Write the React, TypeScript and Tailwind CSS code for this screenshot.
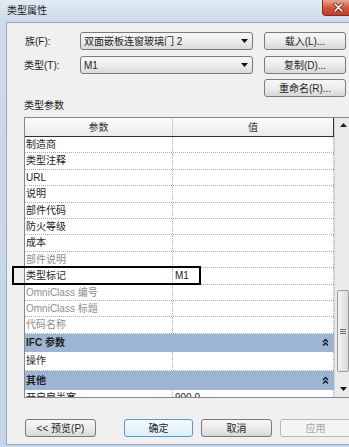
import React from 'react';

type Row = { name: string; value?: string; dim?: boolean };

const rows: Row[] = [
  { name: '制造商' },
  { name: '类型注释' },
  { name: 'URL' },
  { name: '说明' },
  { name: '部件代码' },
  { name: '防火等级' },
  { name: '成本' },
  { name: '部件说明', dim: true },
  { name: '类型标记', value: 'M1' },
  { name: 'OmniClass 编号', dim: true },
  { name: 'OmniClass 标题', dim: true },
  { name: '代码名称', dim: true },
];

function Chevrons() {
  return (
    <svg width="7" height="9" viewBox="0 0 7 9" className="shrink-0">
      <polyline points="1,4 3.5,1.5 6,4" fill="none" stroke="#111" strokeWidth="1.3" />
      <polyline points="1,7.5 3.5,5 6,7.5" fill="none" stroke="#111" strokeWidth="1.3" />
    </svg>
  );
}

function DownArrow() {
  return (
    <svg width="7" height="4" viewBox="0 0 7 4">
      <polygon points="0,0 7,0 3.5,4" fill="#111" />
    </svg>
  );
}

function Btn({ label, kind = 'normal', className = '' }: { label: string; kind?: 'normal' | 'focus' | 'off'; className?: string }) {
  const look =
    kind === 'focus'
      ? 'border-[#5b97c4] bg-linear-to-b from-[#f4fafe] to-[#dceefa] text-[#1e1e1e]'
      : kind === 'off'
      ? 'border-[#b5b9bc] bg-[#f4f4f4] text-[#a3a3a3]'
      : 'border-[#7a7a7a] bg-linear-to-b from-[#f7f7f7] via-[#ececec] to-[#d8d8d8] text-[#1e1e1e]';
  return (
    <div className={`flex h-[18px] shrink-0 items-center justify-center rounded-[3px] border text-[10px] ${look} ${className}`}>
      {label}
    </div>
  );
}

function Combo({ text }: { text: string }) {
  return (
    <div className="flex h-[18px] w-[173px] shrink-0 items-center justify-between rounded-[3px] border border-[#7a7a7a] bg-linear-to-b from-[#f7f7f7] via-[#ededed] to-[#dadada] pl-[3px] pr-[4px] text-[10px]">
      <span>{text}</span>
      <DownArrow />
    </div>
  );
}

export default function App() {
  return (
    <div className="relative h-[447px] w-[349px] overflow-hidden bg-[#c8d8ea] font-['Liberation_Sans','Noto_Sans_CJK_SC',sans-serif] text-[#1e1e1e]">
      {/* title bar */}
      <div className="flex h-[22px] w-[360px] bg-linear-to-b from-[#e2ebf5] to-[#cbdaea]">
        <div className="pl-[7px] pt-[5px] text-[10px] leading-[12px] text-[#1b1b1b]">类型属性</div>
        <div className="ml-auto mr-[6px] flex h-[16px] w-[32px] items-center justify-center rounded-b-[4px] border border-t-0 border-[#7a2f25] bg-linear-to-b from-[#e9a594] via-[#d3563f] to-[#c23d28]">
          <svg width="11" height="9" viewBox="0 0 11 9">
            <path d="M2 1 L9 8 M9 1 L2 8" stroke="#5a1a12" strokeWidth="3" strokeLinecap="round" />
            <path d="M2 1 L9 8 M9 1 L2 8" stroke="#ffffff" strokeWidth="1.6" strokeLinecap="round" />
          </svg>
        </div>
      </div>

      <div className="flex">
        <div className="w-[6px] shrink-0 bg-linear-to-b from-[#cddcec] to-[#c3d4e7]" />
        <div className="h-[423px] w-[354px] shrink-0 border-l border-t border-b border-[#9aa8b8] bg-[#f0f0f0] pl-[17px] pt-[9px]">
          {/* family */}
          <div className="flex items-center">
            <div className="w-[56px] shrink-0 pl-[1px] text-[10px]">族(F):</div>
            <Combo text="双面嵌板连窗玻璃门 2" />
            <Btn label="载入(L)..." className="ml-[11px] w-[82px]" />
          </div>
          {/* type */}
          <div className="mt-[6px] flex items-center">
            <div className="w-[56px] shrink-0 text-[10px]">类型(T):</div>
            <Combo text="M1" />
            <Btn label="复制(D)..." className="ml-[11px] w-[82px]" />
          </div>
          <div className="mt-[5px] flex">
            <Btn label="重命名(R)..." className="ml-[240px] w-[82px]" />
          </div>

          <div className="h-[20px] pt-[2px] text-[10px] leading-[13px]">类型参数</div>

          {/* parameter grid */}
          <div className="flex h-[281px] w-[328px] overflow-hidden border border-[#828790] bg-white text-[10px]">
            <div className="flex w-[309px] shrink-0 flex-col">
              <div className="flex h-[19px] shrink-0 border-b border-[#303030] bg-linear-to-b from-[#fcfcfc] to-[#ebebeb] text-[#333]">
                <div className="flex w-[148px] shrink-0 items-center justify-center border-r border-[#d0d0d0]">参数</div>
                <div className="flex flex-1 items-center justify-center border-r border-[#303030]">值</div>
              </div>

              {rows.map((r) => (
                <div key={r.name} className="flex h-[16.4px] shrink-0 border-b border-dotted border-[#acacac]">
                  <div
                    className={`w-[148px] shrink-0 border-r border-dotted border-[#acacac] pl-[1px] leading-[15px] ${
                      r.dim ? 'text-[#8e8e8e]' : 'text-[#1e1e1e]'
                    }`}
                  >
                    {r.name}
                  </div>
                  <div className="flex-1 border-r border-dotted border-[#acacac] pl-[2px] leading-[15px]">{r.value}</div>
                </div>
              ))}

              <div className="flex h-[18px] shrink-0 items-center justify-between bg-[#9db5d3] pl-[1px] pr-[5px] font-bold">
                <span>IFC 参数</span>
                <Chevrons />
              </div>
              <div className="flex h-[19px] shrink-0 border-b border-dotted border-[#acacac]">
                <div className="w-[148px] shrink-0 border-r border-dotted border-[#acacac] pl-[1px] leading-[18px]">操作</div>
                <div className="flex-1 border-r border-dotted border-[#acacac]" />
              </div>
              <div className="flex h-[19px] shrink-0 items-center justify-between bg-[#9db5d3] pl-[1px] pr-[5px] font-bold">
                <span>其他</span>
                <Chevrons />
              </div>
              <div className="flex h-[17px] shrink-0">
                <div className="w-[148px] shrink-0 border-r border-dotted border-[#acacac] pl-[1px] leading-[16px]">开启扇半宽</div>
                <div className="flex-1 border-r border-dotted border-[#acacac] pl-[2px] leading-[16px]">900.0</div>
              </div>
            </div>

            {/* scrollbar */}
            <div className="flex w-[17px] shrink-0 flex-col border-l border-[#d6d6d6] bg-[#ebebeb]">
              <div className="flex h-[17px] shrink-0 justify-center pt-[5px]">
                <svg width="7" height="4" viewBox="0 0 7 4">
                  <polygon points="0,4 7,4 3.5,0" fill="#222" />
                </svg>
              </div>
              <div className="mx-[2px] mt-[155px] flex h-[82px] shrink-0 flex-col items-center justify-center gap-[1px] rounded-[2px] border border-[#9a9a9a] bg-linear-to-r from-[#f4f4f4] to-[#dadada]">
                <div className="h-px w-[6px] bg-[#6f6f6f]" />
                <div className="h-px w-[6px] bg-[#6f6f6f]" />
                <div className="h-px w-[6px] bg-[#6f6f6f]" />
              </div>
              <div className="mt-auto flex h-[15px] shrink-0 justify-center pt-[5px]">
                <DownArrow />
              </div>
            </div>
          </div>

          {/* bottom buttons */}
          <div className="mt-[21px] flex">
            <Btn label="<< 预览(P)" className="ml-[1px] w-[71px]" />
            <Btn label="确定" kind="focus" className="ml-[28px] w-[69px]" />
            <Btn label="取消" className="ml-[8px] w-[71px]" />
            <Btn label="应用" kind="off" className="ml-[8px] w-[71px]" />
          </div>
        </div>
      </div>

      {/* highlight drawn over the 类型标记 row */}
      <div className="absolute left-[12px] top-[266px] h-[19px] w-[189px] border-2 border-black" />
    </div>
  );
}
